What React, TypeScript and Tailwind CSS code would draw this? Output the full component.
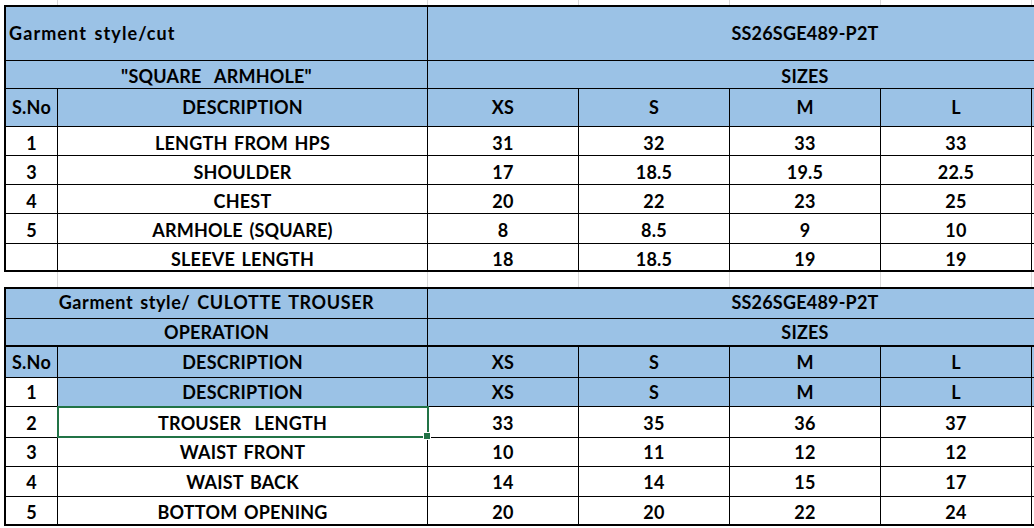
import type { ReactNode } from "react";

const GRID = "grid grid-cols-[52px_370px_151px_151px_151px_151px_151px]";
const BLUE = "bg-[#9bc2e6]";

function Cell({ children, className = "" }: { children?: ReactNode; className?: string }) {
  return (
    <div className={`flex justify-center border-r border-black whitespace-pre ${className}`}>
      {children}
    </div>
  );
}

// light excel gridlines in the empty strips
function GapLines({ h }: { h: string }) {
  return (
    <div className={`flex shrink-0 ${h}`}>
      <div className="w-[58px] shrink-0 border-r border-[#d9d9d9]" />
      <div className="w-[370px] shrink-0 border-r border-[#d9d9d9]" />
      {[0, 1, 2, 3, 4].map((i) => (
        <div key={i} className="w-[151px] shrink-0 border-r border-[#d9d9d9]" />
      ))}
    </div>
  );
}

type DataRow = {
  cells: string[];
  h: string;
  pad: string;
  last?: boolean;
};

const sizeRows: DataRow[] = [
  { cells: ["1", "LENGTH FROM HPS", "31", "32", "33", "33"], h: "h-[29px]", pad: "pb-[4px]" },
  { cells: ["3", "SHOULDER", "17", "18.5", "19.5", "22.5"], h: "h-[29px]", pad: "pb-[4px]" },
  { cells: ["4", "CHEST", "20", "22", "23", "25"], h: "h-[29px]", pad: "pb-[4px]" },
  { cells: ["5", "ARMHOLE (SQUARE)", "8", "8.5", "9", "10"], h: "h-[30px]", pad: "pb-[5px]" },
  { cells: ["", "SLEEVE LENGTH", "18", "18.5", "19", "19"], h: "h-[28px]", pad: "pb-[3px]", last: true },
];

const trouserRows: DataRow[] = [
  { cells: ["2", "TROUSER  LENGTH", "33", "35", "36", "37"], h: "h-[31px]", pad: "pb-[6px]" },
  { cells: ["3", "WAIST FRONT", "10", "11", "12", "12"], h: "h-[29px]", pad: "pb-[6px]" },
  { cells: ["4", "WAIST BACK", "14", "14", "15", "17"], h: "h-[30px]", pad: "pb-[6px]" },
  { cells: ["5", "BOTTOM OPENING", "20", "20", "22", "24"], h: "h-[29px]", pad: "pb-[4px]", last: true },
];

function Body({ rows, selected }: { rows: DataRow[]; selected?: number }) {
  return (
    <>
      {rows.map((r, ri) => (
        <div
          key={ri}
          className={`${GRID} ${r.h} ${r.last ? "border-b-2" : "border-b"} border-black`}
        >
          {r.cells.map((c, ci) => (
            <Cell key={ci} className={`items-end ${r.pad} ${ci === 1 && selected === ri ? "relative" : ""}`}>
              {c}
              {ci === 1 && selected === ri && (
                <>
                  <div className="absolute -left-px -top-px w-[372px] h-[32px] border-2 border-[#217346] pointer-events-none" />
                  <div className="absolute left-[365px] top-[25px] w-[8px] h-[8px] bg-[#217346] border border-white" />
                </>
              )}
            </Cell>
          ))}
          <Cell className="items-end" />
        </div>
      ))}
    </>
  );
}

export default function App() {
  return (
    <div className="w-[1034px] h-[528px] overflow-hidden bg-white text-black text-[18px] leading-[16px] font-bold tracking-[0.2px] [word-spacing:2px] font-['Lato',sans-serif] flex flex-col items-start">
      <GapLines h="h-[5px]" />

      {/* top table: square armhole */}
      <div className="ml-[4px] w-max shrink-0 border-l-2 border-t-2 border-black">
        <div className={`${GRID} h-[54px] border-b border-black ${BLUE}`}>
          <Cell className="col-span-2 items-center justify-start pl-[3px] pb-[2px] tracking-[1.1px]">Garment style/cut</Cell>
          <Cell className="col-span-5 items-center pb-[2px]">SS26SGE489-P2T</Cell>
        </div>
        <div className={`${GRID} h-[28px] border-b border-black ${BLUE}`}>
          <Cell className="col-span-2 items-end pb-[4px]">"SQUARE  ARMHOLE"</Cell>
          <Cell className="col-span-5 items-end pb-[4px]">SIZES</Cell>
        </div>
        <div className={`${GRID} h-[38px] border-b border-black ${BLUE}`}>
          {["S.No", "DESCRIPTION", "XS", "S", "M", "L", ""].map((t, i) => (
            <Cell key={i} className="items-end pb-[11px]">{t}</Cell>
          ))}
        </div>
        <Body rows={sizeRows} />
      </div>

      <GapLines h="h-[15px]" />

      {/* bottom table: culotte trouser */}
      <div className="ml-[4px] w-max shrink-0 border-l-2 border-t-2 border-black">
        <div className={`${GRID} h-[30px] border-b border-black ${BLUE}`}>
          <Cell className="col-span-2 items-end pb-[8px] tracking-[0.6px]">Garment style/ CULOTTE TROUSER</Cell>
          <Cell className="col-span-5 items-end pb-[8px]">SS26SGE489-P2T</Cell>
        </div>
        <div className={`${GRID} h-[28px] border-b-2 border-black ${BLUE}`}>
          <Cell className="col-span-2 items-end pb-[5px]">OPERATION</Cell>
          <Cell className="col-span-5 items-end pb-[5px]">SIZES</Cell>
        </div>
        <div className={`${GRID} h-[31px] border-b border-black ${BLUE}`}>
          {["S.No", "DESCRIPTION", "XS", "S", "M", "L", ""].map((t, i) => (
            <Cell key={i} className="items-end pb-[7px]">{t}</Cell>
          ))}
        </div>
        <div className={`${GRID} h-[29px] border-b border-black`}>
          <Cell className="items-end pb-[6px] bg-white">1</Cell>
          {["DESCRIPTION", "XS", "S", "M", "L", ""].map((t, i) => (
            <Cell key={i} className={`items-end pb-[6px] ${BLUE}`}>{t}</Cell>
          ))}
        </div>
        <Body rows={trouserRows} selected={0} />
      </div>
    </div>
  );
}
